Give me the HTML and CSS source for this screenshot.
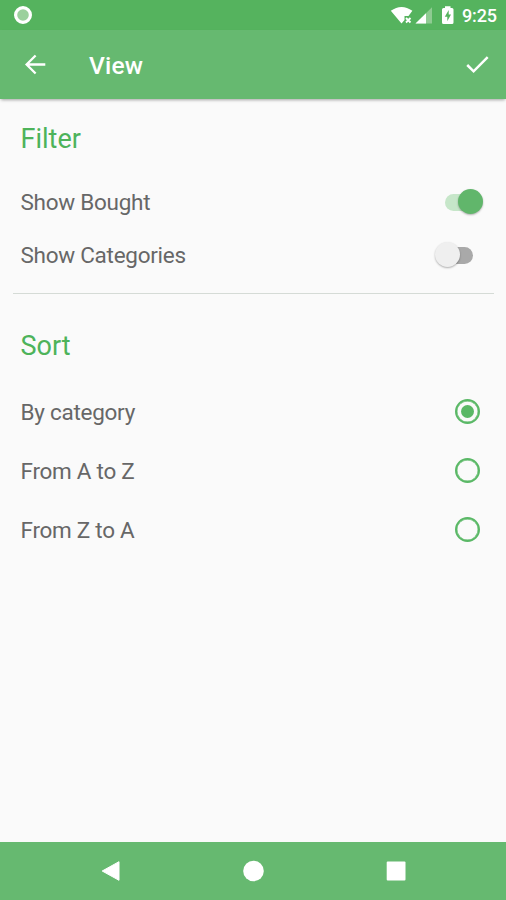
FILE: index.html
```html
<!DOCTYPE html>
<html lang="en">
<head>
<meta charset="utf-8">
<title>View</title>
<link rel="stylesheet" href="styles.css">
</head>
<body>
<div class="screen">
  <div class="status">
    <svg class="status-dot" width="20" height="20" viewBox="0 0 20 20"><circle cx="10" cy="10" r="7.4" fill="#9bd09d" stroke="#fff" stroke-width="3.2"/></svg>
    <svg class="status-icons" width="68" height="24" viewBox="0 0 68 24">
      <path d="M.8 7.8Q11.500 .2 22.400 7.800L18.500 13H14.500V17L11.500 20.500Z" fill="#fff"/>
      <path d="M16 15L20.500 19.500M20.500 15L16 19.500" stroke="#fff" stroke-width="1.900"/>
      <path d="M25.500 20.500L42 4.300V20.500Z" fill="#8fcb92"/>
      <path d="M25.500 20.500L36 10.200V20.500Z" fill="#fff"/>
      <path d="M55 3.200H60.500V5H62Q63.500 5 63.500 6.500V19.500Q63.500 21 62 21H53.500Q52 21 52 19.500V6.500Q52 5 53.500 5H55Z" fill="#fff"/>
      <path d="M58.700 7L54.800 13.800H57.300V18.300L61 11.600H58.700Z" fill="#55b35e"/>
    </svg>
    <span class="clock">9:25</span>
  </div>
  <header class="appbar">
    <svg width="24" height="24" viewBox="0 0 24 24" fill="none" stroke="#fff" stroke-width="2.300"><path d="M22.300 12.500H4M12.600 3.500L3.600 12.500L12.600 21.500"/></svg>
    <h1 class="title">View</h1>
    <svg width="26" height="24" viewBox="0 0 26 24" fill="none" stroke="#fff" stroke-width="2.500"><path d="M3.200 13L9.600 19.300L23.700 5.100"/></svg>
  </header>
  <main class="content">
    <h2 class="heading">Filter</h2>
    <div class="row row-switch"><span>Show Bought</span><span class="switch on"><i class="track"></i><i class="knob"></i></span></div>
    <div class="row row-switch"><span>Show Categories</span><span class="switch"><i class="track"></i><i class="knob"></i></span></div>
    <div class="divider"></div>
    <h2 class="heading sort">Sort</h2>
    <div class="row"><span class="option">By category</span><span class="radio checked"></span></div>
    <div class="row"><span class="option">From A to Z</span><span class="radio"></span></div>
    <div class="row"><span class="option">From Z to A</span><span class="radio"></span></div>
  </main>
  <nav class="navbar">
    <svg width="22" height="24" viewBox="0 0 22 24"><path d="M2.200 12L19 2.700V21.300Z" fill="#fff" stroke="#fff" stroke-linejoin="round"/></svg>
    <svg width="22" height="24" viewBox="0 0 22 24"><circle cx="11.500" cy="12" r="10.300" fill="#fff"/></svg>
    <svg width="22" height="24" viewBox="0 0 22 24"><rect x="1.700" y="2.600" width="18.800" height="18.800" rx="1" fill="#fff"/></svg>
  </nav>
</div>
</body>
</html>
```
FILE: styles.css
```css
* { box-sizing: border-box; }
body { margin: 0; background: #fafafa; font-family: Roboto, sans-serif; }
.screen { width: 506px; height: 900px; display: flex; flex-direction: column; overflow: hidden; }
.status { height: 30px; flex: none; background: #55b35e; display: flex; align-items: center; padding: 0 8px 0 13px; }
.status-icons { margin-left: auto; }
.clock { width: 36px; margin-left: 4px; margin-top: 2px; color: #fff; font-size: 18px; font-weight: 500; letter-spacing: -.15px; line-height: 24px; white-space: nowrap; }
.appbar { height: 68.5px; flex: none; background: #66b970; display: flex; align-items: center; padding: 0 16px 0 23px; box-shadow: 0 2px 3px -1px rgba(0,0,0,.35); }
.title { flex: 1; margin: 3px 0 0 42px; color: #fff; font-size: 24.5px; font-weight: 500; letter-spacing: .2px; line-height: 30px; }
.content { flex: 1; padding: 24px 12px 0 13px; }
.heading { margin: 0 0 21px; padding-left: 7.5px; color: #4db35a; font-size: 27px; font-weight: 400; line-height: 32px; }
.row { height: 59px; padding: 0 14px 0 7.5px; display: flex; align-items: center; justify-content: space-between; color: #676767; font-size: 22.5px; letter-spacing: -.27px; line-height: 28px; }
.row-switch { height: 53px; padding-right: 11px; }
.option { padding-top: 2px; }
.divider { height: 1px; margin-top: 11px; background: #d5dbd6; }
.sort { margin: 36px 0 20px; }
.switch { position: relative; width: 49px; height: 26px; }
.track { position: absolute; left: 12px; top: 4.5px; width: 27px; height: 17px; border-radius: 9px; background: #a9a9a9; }
.knob { position: absolute; left: .5px; top: 0; width: 25px; height: 25px; border-radius: 50%; background: #efefef; box-shadow: 0 1px 2px rgba(0,0,0,.3); }
.on .track { left: 10.5px; background: #c6e6c9; }
.on .knob { left: 24px; background: #61b66b; }
.radio { width: 25px; height: 25px; border: 2px solid #5ab866; border-radius: 50%; display: grid; place-items: center; box-shadow: inset 0 0 0 .4px #5ab866; }
.checked::after { content: ""; width: 13px; height: 13px; border-radius: 50%; background: #5ab866; }
.navbar { height: 58.5px; flex: none; background: #66b970; display: flex; align-items: center; justify-content: center; gap: 120.5px; }
```
